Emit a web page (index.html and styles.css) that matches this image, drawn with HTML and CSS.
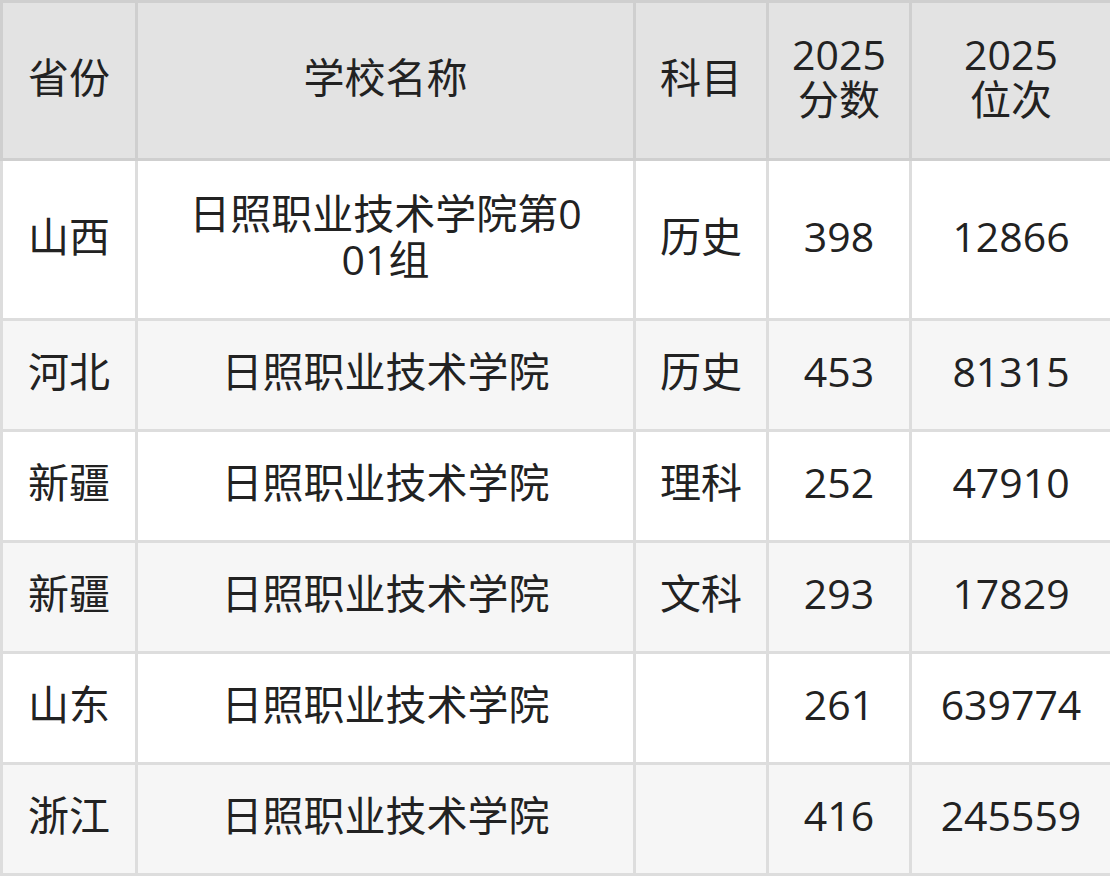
FILE: index.html
```html
<!DOCTYPE html>
<html lang="zh">
<head>
<meta charset="utf-8">
<link rel="stylesheet" href="styles.css">
</head>
<body>
<table class="score-table">
  <colgroup>
    <col class="c-prov">
    <col class="c-school">
    <col class="c-subj">
    <col class="c-score">
    <col class="c-rank">
  </colgroup>
  <thead>
    <tr class="head-row">
      <th>省份</th>
      <th>学校名称</th>
      <th>科目</th>
      <th><span class="line">2025</span><span class="line">分数</span></th>
      <th><span class="line">2025</span><span class="line">位次</span></th>
    </tr>
  </thead>
  <tbody>
    <tr class="tall-row">
      <td>山西</td>
      <td class="school">日照职业技术学院第001组</td>
      <td>历史</td>
      <td>398</td>
      <td>12866</td>
    </tr>
    <tr class="alt">
      <td>河北</td>
      <td class="school">日照职业技术学院</td>
      <td>历史</td>
      <td>453</td>
      <td>81315</td>
    </tr>
    <tr>
      <td>新疆</td>
      <td class="school">日照职业技术学院</td>
      <td>理科</td>
      <td>252</td>
      <td>47910</td>
    </tr>
    <tr class="alt">
      <td>新疆</td>
      <td class="school">日照职业技术学院</td>
      <td>文科</td>
      <td>293</td>
      <td>17829</td>
    </tr>
    <tr>
      <td>山东</td>
      <td class="school">日照职业技术学院</td>
      <td></td>
      <td>261</td>
      <td>639774</td>
    </tr>
    <tr class="alt">
      <td>浙江</td>
      <td class="school">日照职业技术学院</td>
      <td></td>
      <td>416</td>
      <td>245559</td>
    </tr>
  </tbody>
</table>
</body>
</html>
```

FILE: styles.css
```css
html, body {
  margin: 0;
  padding: 0;
  background: #ffffff;
}

.score-table {
  width: 1110px;
  table-layout: fixed;
  border-collapse: collapse;
  font-family: "Open Sans", "Noto Sans CJK SC", sans-serif;
  font-size: 41px;
  line-height: 46px;
  color: #222222;
}

.c-prov { width: 135px; }
.c-school { width: 498px; }
.c-subj { width: 133px; }
.c-score { width: 143px; }
.c-rank { width: 201px; }

.score-table th,
.score-table td {
  border: 3px solid #dddddd;
  text-align: center;
  vertical-align: middle;
  padding: 0 2px 8px;
  font-weight: normal;
}

.score-table th {
  background: #e3e3e3;
  border-color: #cfcfcf;
}

.line {
  display: block;
  height: 45px;
  line-height: 45px;
}

.head-row { height: 158px; }
.score-table tbody tr { height: 111px; }
.score-table tbody tr.tall-row { height: 160px; }

.score-table td.school {
  padding: 0 44px 8px;
  word-break: break-all;
}

.alt td {
  background: #f6f6f6;
}
```
